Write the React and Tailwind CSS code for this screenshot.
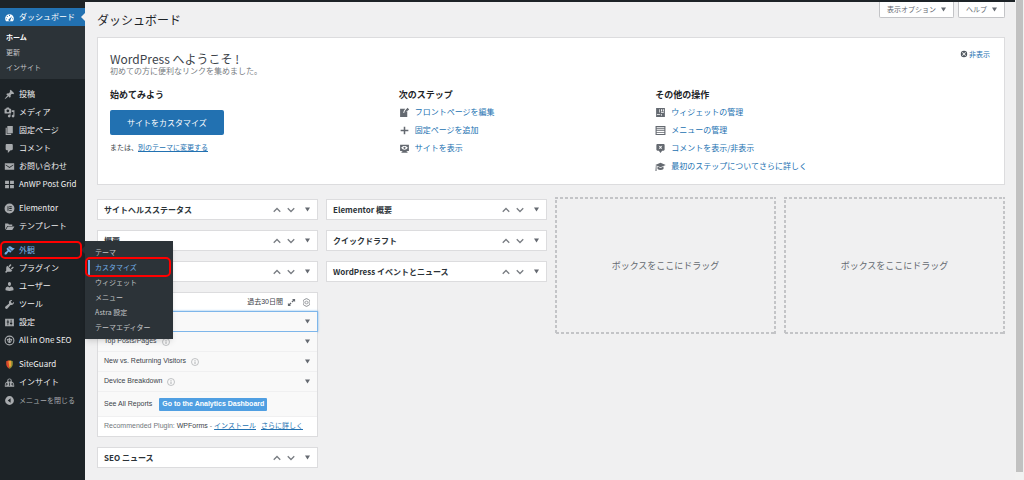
import { useState } from "react";

// 20x20 admin glyphs
const ICONS = {
  dashboard:
    "M3.76 17h12.48C17.34 15.63 18 13.9 18 12c0-4.41-3.58-8-8-8s-8 3.59-8 8c0 1.9.66 3.63 1.76 5zM9 6.2a1 1 0 1 1 2 0a1 1 0 1 1-2 0zM5 8.3a1 1 0 1 1 2 0a1 1 0 1 1-2 0zM3.2 12.2a1 1 0 1 1 2 0a1 1 0 1 1-2 0zM14.8 12.2a1 1 0 1 1 2 0a1 1 0 1 1-2 0zM14.5 7.5l-2.6 6.2a2 2 0 1 1-2.6-1.2z",
  post: "M10.44 3.02l1.82-1.82 6.36 6.35-1.83 1.82c-1.05-.68-2.48-.57-3.41.36l-.75.75c-.92.93-1.04 2.35-.35 3.41l-1.83 1.82-2.41-2.41-2.8 2.79c-.42.42-3.38 2.71-3.8 2.29s1.86-3.39 2.28-3.81l2.79-2.79L4.1 9.36l1.83-1.82c1.05.69 2.48.57 3.4-.36l.75-.75c.93-.92 1.05-2.35.36-3.41z",
  media:
    "M13 11V4c0-.55-.45-1-1-1h-1.67L9 1H5L3.67 3H2c-.55 0-1 .45-1 1v7c0 .55.45 1 1 1h10c.55 0 1-.45 1-1zM7 4.5c1.38 0 2.5 1.12 2.5 2.5S8.38 9.5 7 9.5 4.5 8.38 4.5 7 5.62 4.5 7 4.5zM14 6h5v10.5c0 1.38-1.12 2.5-2.5 2.5S14 17.88 14 16.5s1.12-2.5 2.5-2.5c.17 0 .34.02.5.05V9h-3V6zm-4 8.05V13h2v3.5c0 1.38-1.12 2.5-2.5 2.5S7 17.88 7 16.5 8.12 14 9.5 14c.17 0 .34.02.5.05z",
  page: "M6 15V2h10v13H6zM5 16h8v2H3V5h2v11z",
  comments: "M5 2h9c1.1 0 2 .9 2 2v7c0 1.1-.9 2-2 2h-2l-5 5v-5H5c-1.1 0-2-.9-2-2V4c0-1.1.9-2 2-2z",
  mail: "M1.5 4h17v12h-17zM3 6.2v1.6l7 5 7-5V6.2l-7 4.6z",
  grid: "M2 3h7v6H2zM11 3h7v6h-7zM2 11h7v6H2zM11 11h7v6h-7z",
  elementor:
    "M10 1a9 9 0 1 0 0 18a9 9 0 1 0 0-18zM6.5 6v8h1.6V6zM9.5 6v1.5h4.5V6zM9.5 9.3v1.5h4.5V9.3zM9.5 12.5V14h4.5v-1.5z",
  folder: "M2 16V4.5h5.5l1.5 2h6V9H6zM3.3 16.5L7 10h12l-4 6.5z",
  appearance:
    "M14.48 11.06L7.41 3.99l1.5-1.5c.5-.56 2.3-.47 3.51.32 1.21.8 1.43 1.28 2.91 2.1 1.18.64 2.45 1.26 4.45.85zm-.71.71L6.7 4.7 4.93 6.47c-.39.39-.39 1.02 0 1.41l1.06 1.06c.39.39.39 1.03 0 1.42-.6.6-1.43 1.11-2.21 1.69-.35.26-.7.53-1.01.84C1.43 14.23.4 16.08 1.4 17.07c.99 1 2.84-.03 4.18-1.36.31-.31.58-.66.85-1.02.57-.78 1.08-1.61 1.69-2.21.39-.39 1.02-.39 1.41 0l1.06 1.06c.39.39 1.02.39 1.41 0z",
  plugins:
    "M13.11 4.36L9.87 7.6 8 5.73l3.24-3.24c.35-.34 1.05-.2 1.56.32.52.51.66 1.21.31 1.55zm-8 1.77l.91-1.12 9.01 9.01-1.19.84c-.71.71-2.63 1.16-3.82 1.16H6.14L4.9 17.26c-.59.59-1.54.59-2.12 0-.59-.58-.59-1.53 0-2.12l1.24-1.24v-3.88c0-1.13.4-3.19 1.09-3.89zm7.26 3.97l3.24-3.24c.34-.35 1.04-.21 1.55.31.52.51.66 1.21.31 1.55l-3.24 3.25z",
  users:
    "M10 9.25c-2.27 0-2.73-3.44-2.73-3.44C7 4.02 7.82 2 9.97 2c2.16 0 2.98 2.02 2.71 3.81 0 0-.41 3.44-2.68 3.44zm0 2.57L12.72 10c2.39 0 4.52 2.33 4.52 4.53v2.49s-3.65 1.13-7.24 1.13c-3.65 0-7.24-1.13-7.24-1.13v-2.49c0-2.25 1.94-4.48 4.47-4.48z",
  tools:
    "M16.68 9.77c-1.34 1.34-3.3 1.67-4.95.99l-5.41 6.52c-.99.99-2.59.99-3.58 0s-.99-2.59 0-3.57l6.52-5.42c-.68-1.65-.35-3.61.99-4.95 1.28-1.28 3.12-1.62 4.72-1.06l-2.89 2.89 2.82 2.82 2.86-2.87c.53 1.58.18 3.39-1.08 4.65z",
  settings:
    "M2 3h16v14H2zM6.4 5v3H5v2h1.4v5h1.4v-5h1.4V8H7.8V5zM12.2 5v5.5h-1.4v2h1.4V15h1.4v-2.5H15v-2h-1.4V5z",
  seo: "M10 1a9 9 0 1 0 0 18a9 9 0 1 0 0-18zM10 3a7 7 0 1 1 0 14a7 7 0 1 1 0-14zM8.8 5h2.4v1.4l1.6.8 1.2-.6 1.2 2-1.2 1v2.4h-2v2.6H8v-2.6H6V9.6l-1.2-1 1.2-2 1.2.6 1.6-.8zM8 8.5V11h1V8.5zM11 8.5V11h1V8.5z",
  insights:
    "M10 2.5a4 4 0 0 0-4 4v1.6A6.5 6.5 0 0 0 1.5 14v3.5h17V14A6.5 6.5 0 0 0 14 8.1V6.5a4 4 0 0 0-4-4zM10 4a2.3 2.3 0 1 1 0 4.6a2.3 2.3 0 0 1 0-4.6zM5 10.5l2.5 3H4.5v2.5H3v-2.5zM9.3 10h1.4v6H9.3zM15 10.5l2 3v2.5h-1.5v-2.5h-3z",
  collapse: "M10 2a8 8 0 1 0 0 16a8 8 0 1 0 0-16zM12 5.8v8.4L6.8 10z",
  edit: "M2 3h9.5L9 6.5 7.5 11 12 9.5l3-2.5v11H2zM15.5 1.5l3 3-5.5 4.5-3.5 1.2 1.2-3.5z",
  plus: "M8.6 3h2.8v5.6H17v2.8h-5.6V17H8.6v-5.6H3V8.6h5.6z",
  view: "M2 3h16v11.5h-4V16h1.5v1.5h-11V16H6v-1.5H2zM4 8.7C5.5 6.5 7.5 5.3 10 5.3s4.5 1.2 6 3.4c-1.5 2.3-3.5 3.5-6 3.5S5.5 11 4 8.7zM10 6.7a2 2 0 1 0 0 4a2 2 0 1 0 0-4z",
  widgets: "M2 2h16v16H2zM3.5 12.5V14h6v-1.5zM7.5 4v6h1.2V4zM11 4v4h2V4zM14.5 4v4H16V4zM11 9.5v1.3h5V9.5zM11 12.5V16h1.2v-3.5z",
  menu: "M1 2h18v16H1zM3 4v2h14V4zM3 7.5v2h14v-2zM3 11v2h14v-2zM3 14.5v1.8h14v-1.8z",
  commentsOff:
    "M4.5 2h11c1.1 0 2 .9 2 2v8c0 1.1-.9 2-2 2h-2.5l-3 4-3-4H4.5c-1.1 0-2-.9-2-2V4c0-1.1.9-2 2-2zM6.7 4.5L8.7 8l-2 3.5L10 9.6l3.3 1.9-2-3.5 2-3.5L10 6.4z",
  learn: "M10 3L0.5 7.2 10 11.4l9.5-4.2zM4.5 10v4.5c3 2.5 8 2.5 11 0V10L10 12.8zM1.5 8.5h1.3V18H.8z",
  dismiss:
    "M10 2a8 8 0 1 0 0 16a8 8 0 1 0 0-16zM6.8 5.3L10 8.5l3.2-3.2 1.5 1.5L11.5 10l3.2 3.2-1.5 1.5L10 11.5l-3.2 3.2-1.5-1.5L8.5 10 5.3 6.8z",
  expand: "M11 2h7v7l-2.5-2.5-3.5 3.5L10 8l3.5-3.5zM9 18H2v-7l2.5 2.5L8 10l2 2-3.5 3.5z",
};

function Icon({ name, className = "size-[11px]" }) {
  return (
    <svg viewBox="0 0 20 20" fill="currentColor" fillRule="evenodd" aria-hidden="true" className={`shrink-0 ${className}`}>
      <path d={ICONS[name]} />
    </svg>
  );
}

function ShieldIcon() {
  return (
    <svg viewBox="0 0 20 20" aria-hidden="true" className="size-[11px] shrink-0">
      <path d="M4 4l6-2v16c-3-2-6-5-6-9z" fill="#d9482b" />
      <path d="M10 2l6 2v5c0 4-3 7-6 9z" fill="#8d8f35" />
      <path d="M8 4l5-1v9l-3 4z" fill="#f0a13a" />
    </svg>
  );
}

function Caret() {
  return (
    <svg viewBox="0 0 10 10" fill="#646970" aria-hidden="true" className="size-[5px] shrink-0">
      <path d="M0 1h10L5 9z" />
    </svg>
  );
}

function Chevron({ up }) {
  return (
    <svg viewBox="0 0 16 16" fill="none" stroke="#787c82" strokeWidth="2.6" aria-hidden="true" className="size-2">
      <path d={up ? "M1.5 11.5L8 5l6.5 6.5" : "M1.5 4.5L8 11l6.5-6.5"} />
    </svg>
  );
}

function InfoIcon() {
  return (
    <svg viewBox="0 0 16 16" fill="none" stroke="#a7aaad" strokeWidth="1.4" aria-hidden="true" className="size-2">
      <circle cx="8" cy="8" r="7" />
      <path d="M8 7v5M8 4v1.6" strokeWidth="1.8" />
    </svg>
  );
}

function GearIcon() {
  return (
    <svg viewBox="0 0 20 20" fill="none" stroke="#8c8f94" strokeWidth="1.8" aria-hidden="true" className="size-[9px]">
      <path d="M8 1.5h4l.8 2.3 2.4-.6 2 3.4L15.7 8.5v3l1.5 1.9-2 3.4-2.4-.6-.8 2.3H8l-.8-2.3-2.4.6-2-3.4 1.5-1.9v-3L2.8 6.6l2-3.4 2.4.6z" />
      <circle cx="10" cy="10" r="3" />
    </svg>
  );
}

const menuGroups = [
  [
    { icon: "post", label: "投稿" },
    { icon: "media", label: "メディア" },
    { icon: "page", label: "固定ページ" },
    { icon: "comments", label: "コメント" },
    { icon: "mail", label: "お問い合わせ" },
    { icon: "grid", label: "AnWP Post Grid" },
  ],
  [
    { icon: "elementor", label: "Elementor" },
    { icon: "folder", label: "テンプレート" },
  ],
  [
    { icon: "appearance", label: "外観", open: true },
    { icon: "plugins", label: "プラグイン" },
    { icon: "users", label: "ユーザー" },
    { icon: "tools", label: "ツール" },
    { icon: "settings", label: "設定" },
    { icon: "seo", label: "All in One SEO" },
  ],
  [
    { icon: "shield", label: "SiteGuard" },
    { icon: "insights", label: "インサイト" },
  ],
];

const appearanceMenu = ["テーマ", "カスタマイズ", "ウィジェット", "メニュー", "Astra 設定", "テーマエディター"];

const nextSteps = [
  { icon: "edit", label: "フロントページを編集" },
  { icon: "plus", label: "固定ページを追加" },
  { icon: "view", label: "サイトを表示" },
];

const moreActions = [
  { icon: "widgets", label: "ウィジェットの管理" },
  { icon: "menu", label: "メニューの管理" },
  { icon: "commentsOff", label: "コメントを表示/非表示" },
  { icon: "learn", label: "最初のステップについてさらに詳しく" },
];

const reports = ["Top Posts/Pages", "New vs. Returning Visitors", "Device Breakdown"];

function Flyout() {
  return (
    <ul className="absolute left-full top-0 z-10 w-[88px] bg-[#2c3338] py-1 text-[7px] text-[#c3c4c7] shadow-md">
      {appearanceMenu.map((label) => (
        <li key={label} className="relative">
          {label === "カスタマイズ" ? (
            <>
              <a href="#" className="ml-[3px] flex h-[15px] items-center border-l-2 border-[#72aee6] pl-[5px] text-[#72aee6]">
                {label}
              </a>
              <span className="pointer-events-none absolute -top-[3px] -bottom-[2px] left-0 right-[2px] rounded-[5px] border-2 border-[#ff0000]" />
            </>
          ) : (
            <a href="#" className="flex h-[15px] items-center pl-[10px]">{label}</a>
          )}
        </li>
      ))}
    </ul>
  );
}

function MenuItem({ item }) {
  return (
    <li className="relative">
      <a
        href="#"
        className={`flex h-[18px] items-center gap-1 pl-1 whitespace-nowrap ${item.open ? "text-[#72aee6]" : "text-[#f0f0f1]"}`}
      >
        <span className={item.open ? "" : "text-[#a7aaad]"}>
          {item.icon === "shield" ? <ShieldIcon /> : <Icon name={item.icon} />}
        </span>
        {item.label}
      </a>
      {item.open && (
        <>
          <span className="absolute right-0 top-[5px] border-4 border-l-0 border-transparent border-r-[#2c3338]" />
          <span className="pointer-events-none absolute inset-y-0 left-0 right-[3px] rounded-[5px] border-2 border-[#ff0000]" />
          <Flyout />
        </>
      )}
    </li>
  );
}

function Sidebar() {
  return (
    <nav className="w-[85px] shrink-0 bg-[#1d2327] pt-[6px] text-[8px]">
      <a href="#" className="relative flex h-[18px] items-center gap-1 bg-[#2271b1] pl-1 whitespace-nowrap text-white">
        <Icon name="dashboard" />
        ダッシュボード
        <span className="absolute right-0 top-[5px] border-4 border-l-0 border-transparent border-r-[#f0f0f1]" />
      </a>
      <ul className="bg-[#2c3338] py-1 text-[7px] text-[#c3c4c7]">
        <li><a href="#" className="flex h-[15px] items-center pl-[6px] font-bold text-white">ホーム</a></li>
        <li><a href="#" className="flex h-[15px] items-center pl-[6px]">更新</a></li>
        <li><a href="#" className="flex h-[15px] items-center pl-[6px]">インサイト</a></li>
      </ul>
      {menuGroups.map((group, i) => (
        <ul key={i} className="pt-[6px]">
          {group.map((item) => (
            <MenuItem key={item.label} item={item} />
          ))}
        </ul>
      ))}
      <button type="button" className="flex h-[18px] items-center gap-1 pl-1 text-[7px] whitespace-nowrap text-[#a7aaad]">
        <Icon name="collapse" />
        メニューを閉じる
      </button>
    </nav>
  );
}

function LinkList({ title, items }) {
  return (
    <div>
      <h3 className="mb-[2px] text-[9px] leading-3 font-bold text-[#1d2327]">{title}</h3>
      <ul>
        {items.map((item) => (
          <li key={item.label} className="flex h-[18px] items-center gap-[5px] text-[#646970]">
            <Icon name={item.icon} />
            <a href="#" className="text-[#2271b1]">{item.label}</a>
          </li>
        ))}
      </ul>
    </div>
  );
}

function WelcomePanel({ onDismiss }) {
  return (
    <section className="relative border border-[#dcdcde] bg-white px-3 pt-[13px] pb-[9px]">
      <button type="button" onClick={onDismiss} className="absolute top-[11px] right-[14px] flex items-center gap-[1px] text-[7px] leading-[10px] text-[#2271b1]">
        <Icon name="dismiss" className="size-2 text-[#50575e]" />
        非表示
      </button>
      <h2 className="text-[12px] leading-[15px] text-[#3c434a]">WordPress へようこそ !</h2>
      <p className="leading-[10px] text-[#787c82]">初めての方に便利なリンクを集めました。</p>
      <div className="mt-[13px] grid grid-cols-[18fr_16fr_21fr]">
        <div>
          <h3 className="text-[9px] leading-3 font-bold text-[#1d2327]">始めてみよう</h3>
          <button type="button" className="mt-[9px] block h-[25px] rounded-[2px] bg-[#2271b1] px-[17px] text-white">
            サイトをカスタマイズ
          </button>
          <p className="mt-[7px] text-[7px] leading-[10px] text-[#3c434a]">
            または、<a href="#" className="text-[#2271b1] underline">別のテーマに変更する</a>
          </p>
        </div>
        <LinkList title="次のステップ" items={nextSteps} />
        <LinkList title="その他の操作" items={moreActions} />
      </div>
    </section>
  );
}

function Postbox({ title }) {
  return (
    <section className="flex h-[21px] items-center border border-[#dcdcde] bg-white pr-[7px] pl-[6px]">
      <h2 className="flex-1 whitespace-nowrap font-bold text-[#2c3338]">{title}</h2>
      <button type="button" aria-label="上に移動"><Chevron up /></button>
      <button type="button" aria-label="下に移動" className="ml-[6px]"><Chevron /></button>
      <button type="button" aria-label="パネルを切り替え" className="ml-[10px]"><Caret /></button>
    </section>
  );
}

function Analytics() {
  return (
    <section className="border border-[#dcdcde] bg-white font-['Liberation_Sans','Noto_Sans_CJK_JP',sans-serif] text-[7px] text-[#3c434a]">
      <header className="flex h-[18px] items-center justify-end gap-1 pr-[6px]">
        <span>過去30日間</span>
        <button type="button" aria-label="展開" className="text-[#646970]"><Icon name="expand" className="size-[9px]" /></button>
        <button type="button" aria-label="設定" className="ml-[2px]"><GearIcon /></button>
      </header>
      <div className="-mx-px border border-[#7eb6ea] bg-[#f9f9f9] shadow-[0_0_2px_#7eb6ea]">
        <button type="button" aria-label="Overview" className="flex h-[19px] w-full items-center justify-end pr-[7px]">
          <Caret />
        </button>
      </div>
      {reports.map((label) => (
        <button key={label} type="button" className="flex h-5 w-full items-center gap-[5px] border-b border-[#f0f0f1] bg-[#f9f9f9] pr-[7px] pl-[6px]">
          {label}
          <InfoIcon />
          <span className="ml-auto"><Caret /></span>
        </button>
      ))}
      <div className="flex h-[25px] items-center gap-[7px] border-b border-[#f0f0f1] bg-[#f9f9f9] pl-[6px]">
        See All Reports
        <button type="button" className="h-[13px] rounded-[1px] bg-[#509fe2] px-[3px] font-bold text-white">
          Go to the Analytics Dashboard
        </button>
      </div>
      <p className="flex h-[19px] items-center pl-[6px] whitespace-pre text-[#72777c]">
        Recommended Plugin: <span className="text-[#3c434a]">WPForms</span> - <a href="#" className="text-[#2271b1] underline">インストール</a>
        <a href="#" className="ml-[5px] text-[#2271b1] underline">さらに詳しく</a>
      </p>
    </section>
  );
}

function DropZone() {
  return (
    <div className="relative flex h-[137px] items-center justify-center text-[9px] text-[#646970]">
      {/* short dashes, half of the stroke is clipped by the svg edge */}
      <svg aria-hidden="true" className="pointer-events-none absolute inset-0 size-full">
        <rect width="100%" height="100%" fill="none" stroke="#c3c4c7" strokeWidth="4" strokeDasharray="3 2" />
      </svg>
      ボックスをここにドラッグ
    </div>
  );
}

function ScreenTab({ children }) {
  return (
    <button type="button" className="flex h-4 items-center gap-[5px] rounded-b-[2px] border border-t-0 border-[#c3c4c7] bg-white px-[7px] text-[7px] text-[#646970]">
      {children}
      <Caret />
    </button>
  );
}

function App() {
  const [showWelcome, setShowWelcome] = useState(true);

  return (
    <div className="flex min-h-screen bg-[#f0f0f1] font-['Noto_Sans_CJK_JP',sans-serif] text-[8px]">
      <div className="flex min-w-0 flex-1 flex-col">
        <div className="h-[2px] bg-[#1d2327]" />
        <div className="flex flex-1">
          <Sidebar />
          <main className="min-w-0 flex-1 pr-[10px] pl-3">
            <div className="flex h-[35px] items-start justify-between">
              <h1 className="pt-[9px] text-[12px] leading-[18px] text-[#1d2327]">ダッシュボード</h1>
              <div className="flex gap-1">
                <ScreenTab>表示オプション</ScreenTab>
                <ScreenTab>ヘルプ</ScreenTab>
              </div>
            </div>

            {showWelcome && <WelcomePanel onDismiss={() => setShowWelcome(false)} />}

            <div className="mt-3 grid grid-cols-4 items-start gap-2">
              <div className="flex flex-col gap-[10px] pt-[2px]">
                <Postbox title="サイトヘルスステータス" />
                <Postbox title="概要" />
                <Postbox />
                <Analytics />
                <Postbox title="SEO ニュース" />
              </div>
              <div className="flex flex-col gap-[10px] pt-[2px]">
                <Postbox title="Elementor 概要" />
                <Postbox title="クイックドラフト" />
                <Postbox title="WordPress イベントとニュース" />
              </div>
              <DropZone />
              <DropZone />
            </div>
          </main>
        </div>
      </div>
      {/* scroll track */}
      <div className="w-[9px] bg-[#f1f1f1] px-px pb-2">
        <div className="h-full bg-[#c1c1c1]" />
      </div>
    </div>
  );
}

export default App;
